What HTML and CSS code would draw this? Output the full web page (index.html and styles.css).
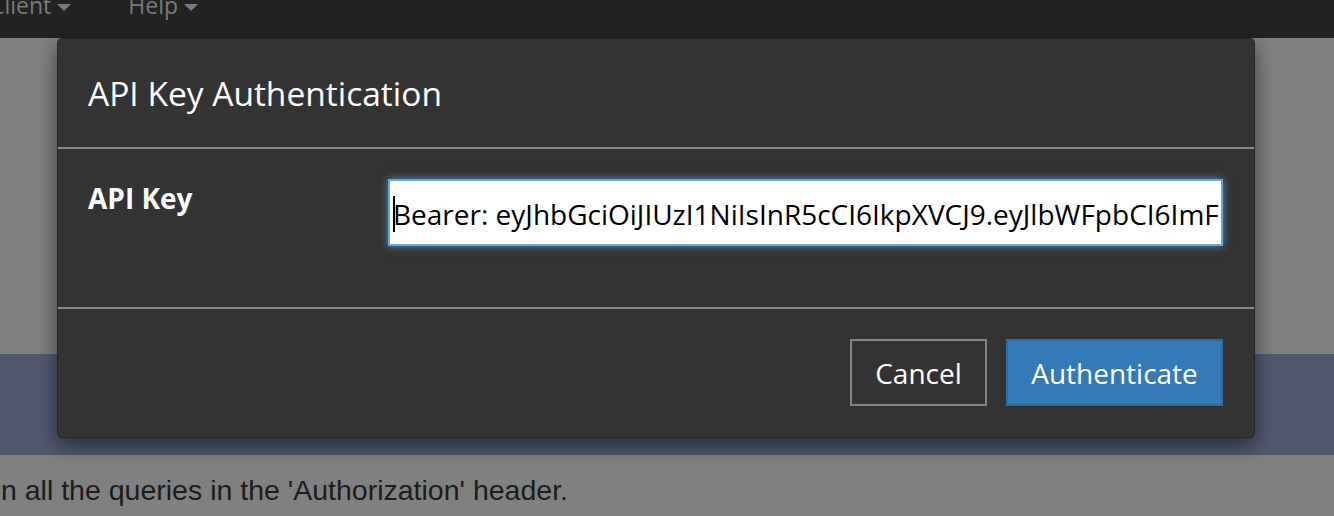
FILE: index.html
```html
<!DOCTYPE html>
<html>
<head>
<meta charset="utf-8">
<title>API Key Authentication</title>
<link rel="stylesheet" href="styles.css">
</head>
<body>
<div class="page">
  <nav class="navbar">
    <a class="nav-item nav-client">Client<span class="caret"></span></a>
    <a class="nav-item">Help<span class="caret"></span></a>
  </nav>
  <div class="spacer"></div>
  <div class="band"></div>
  <p class="hint">n all the queries in the 'Authorization' header.</p>
</div>

<div class="modal">
  <div class="modal-header">
    <h4 class="modal-title">API Key Authentication</h4>
  </div>
  <div class="modal-body">
    <div class="form-row">
      <label class="form-label" for="apikey">API Key</label>
      <div class="input-wrap">
        <input id="apikey" class="form-input" type="text" value="Bearer: eyJhbGciOiJIUzI1NiIsInR5cCI6IkpXVCJ9.eyJlbWFpbCI6ImFkbWluQGV4YW1wbGUuY29tIn0">
        <span class="cursor"></span>
      </div>
    </div>
  </div>
  <div class="modal-footer">
    <button class="btn btn-default">Cancel</button>
    <button class="btn btn-primary">Authenticate</button>
  </div>
</div>
</body>
</html>
```
FILE: styles.css
```css
* { box-sizing: border-box; }
html, body { margin: 0; padding: 0; }
body {
  width: 1334px;
  height: 516px;
  overflow: hidden;
  background: #808080;
  font-family: "Open Sans", "DejaVu Sans", sans-serif;
}
.page {
  display: flex;
  flex-direction: column;
  height: 516px;
}
.navbar {
  height: 38px;
  background: #222222;
  display: flex;
  align-items: flex-start;
  overflow: hidden;
  flex-shrink: 0;
}
.nav-item {
  display: flex;
  align-items: center;
  font-size: 23px;
  line-height: 23px;
  color: #7a7a7a;
  margin-top: -6px;
}
.nav-client { margin-left: -10px; margin-right: 57px; }
.caret {
  display: inline-block;
  width: 0;
  height: 0;
  margin-left: 6px;
  margin-top: 4px;
  border-left: 7px solid transparent;
  border-right: 7px solid transparent;
  border-top: 7px solid #7a7a7a;
}
.spacer { height: 316px; flex-shrink: 0; }
.band {
  height: 101px;
  background: #525770;
  flex-shrink: 0;
}
.hint {
  margin: 19px 0 0 1px;
  font-family: "Liberation Sans", Arial, sans-serif;
  font-size: 28.5px;
  line-height: 32px;
  color: #1c1c1c;
  white-space: nowrap;
}

.modal {
  position: absolute;
  left: 57px;
  top: 38px;
  width: 1198px;
  background: #333333;
  border: 1px solid #262626;
  border-radius: 5px;
  box-shadow: 0 8px 20px rgba(0, 0, 0, 0.5);
  color: #ffffff;
}
.modal-header {
  padding: 30px 30px;
  border-bottom: 2px solid #888888;
}
.modal-title {
  margin: 0;
  font-size: 33.5px;
  line-height: 48px;
  font-weight: 400;
}
.modal-body {
  padding: 30px 31px 61px 30px;
  border-bottom: 2px solid #888888;
}
.form-row {
  display: flex;
  align-items: flex-start;
}
.form-label {
  width: 300px;
  flex-shrink: 0;
  font-size: 28px;
  line-height: 38px;
  font-weight: 700;
}
.input-wrap {
  flex: 1;
  position: relative;
}
.form-input {
  display: block;
  width: 100%;
  height: 67px;
  padding: 2px 2px 0 3px;
  border: 2px solid #62a8e2;
  border-radius: 0;
  background: #ffffff;
  color: #000000;
  font-family: "Open Sans", "DejaVu Sans", sans-serif;
  font-size: 28px;
  outline: none;
  box-shadow: 0 0 8px rgba(102, 175, 233, 0.7);
}
.cursor {
  position: absolute;
  left: 5px;
  top: 17px;
  width: 2px;
  height: 36px;
  background: #000000;
}
.modal-footer {
  padding: 30px 31px 31px 30px;
  display: flex;
  justify-content: flex-end;
  gap: 19px;
}
.btn {
  height: 67px;
  padding: 0;
  font-family: "Open Sans", "DejaVu Sans", sans-serif;
  font-size: 28px;
  border-radius: 0;
  color: #ffffff;
  cursor: pointer;
}
.btn-default {
  width: 137px;
  background: #333333;
  border: 2px solid #858585;
}
.btn-primary {
  width: 217px;
  background: #337ab7;
  border: 2px solid #2e6da4;
}
```
